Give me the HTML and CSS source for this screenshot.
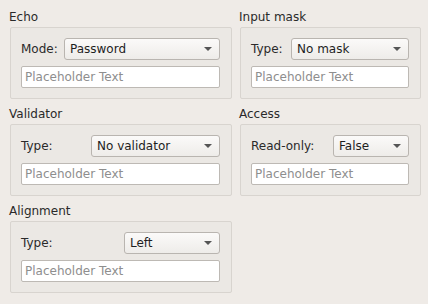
FILE: index.html
```html
<html lang="en">
<head>
    <meta charset="UTF-8">
    <title>Line edits</title>
    <link rel="stylesheet" href="styles.css">
</head>
<body>
    <div class="groups">
        <div class="group">
            <div class="group-title">Echo</div>
            <div class="group-box">
                <div class="form-row">
                    <span class="lbl lbl-echo">Mode:</span>
                    <div class="combo">Password<span class="arrow"></span></div>
                </div>
                <div class="line-edit">Placeholder Text</div>
            </div>
        </div>
        <div class="group">
            <div class="group-title">Input mask</div>
            <div class="group-box">
                <div class="form-row">
                    <span class="lbl lbl-mask">Type:</span>
                    <div class="combo">No mask<span class="arrow"></span></div>
                </div>
                <div class="line-edit">Placeholder Text</div>
            </div>
        </div>
        <div class="group">
            <div class="group-title">Validator</div>
            <div class="group-box">
                <div class="form-row">
                    <span class="lbl lbl-validator">Type:</span>
                    <div class="combo">No validator<span class="arrow"></span></div>
                </div>
                <div class="line-edit">Placeholder Text</div>
            </div>
        </div>
        <div class="group">
            <div class="group-title">Access</div>
            <div class="group-box">
                <div class="form-row">
                    <span class="lbl lbl-access">Read-only:</span>
                    <div class="combo">False<span class="arrow"></span></div>
                </div>
                <div class="line-edit">Placeholder Text</div>
            </div>
        </div>
        <div class="group">
            <div class="group-title">Alignment</div>
            <div class="group-box">
                <div class="form-row">
                    <span class="lbl lbl-align">Type:</span>
                    <div class="combo">Left<span class="arrow"></span></div>
                </div>
                <div class="line-edit">Placeholder Text</div>
            </div>
        </div>
    </div>
</body>
</html>
```

FILE: styles.css
```css
* {
    box-sizing: border-box;
    margin: 0;
}
body {
    background: #efebe7;
    font-family: 'DejaVu Sans', sans-serif;
    font-size: 12px;
    color: #2a2a2a;
}
.groups {
    display: grid;
    grid-template-columns: 222px 181px;
    column-gap: 8px;
    row-gap: 6px;
    padding: 8px 0 0 10px;
}
.group-title { /*the group box caption*/
    height: 16px;
    line-height: 18px;
    margin-left: -1px;
    margin-bottom: 3px;
}
.group-box {
    border: 1px solid #d8d4cf;
    border-radius: 2px;
    background: #ebe8e4;
    padding: 10px 11px 10px 10px;
    display: flex;
    flex-direction: column;
    gap: 6px;
}
.form-row {
    display: flex;
    align-items: center;
}
.lbl {
    flex: none;
}
.lbl-echo { width: 43px; }
.lbl-mask { width: 40px; }
.lbl-validator { width: 70px; }
.lbl-access { width: 82px; }
.lbl-align { width: 103px; }
.combo { /*drop down box*/
    flex: 1;
    height: 22px;
    line-height: 20px;
    padding-left: 5px;
    border: 1px solid #b9b5b0;
    border-radius: 3px;
    background: linear-gradient(#fbfaf9, #eeece9);
    color: #1e1e1e;
    position: relative;
}
.arrow {
    position: absolute;
    right: 7px;
    top: 8px;
    width: 0;
    height: 0;
    border-left: 4px solid transparent;
    border-right: 4px solid transparent;
    border-top: 4px solid #555;
}
.line-edit {
    height: 22px;
    line-height: 20px;
    padding-left: 3px;
    border: 1px solid #bdb9b4;
    border-radius: 2px;
    background: #fff;
    color: #8e8e8e;
}
```
